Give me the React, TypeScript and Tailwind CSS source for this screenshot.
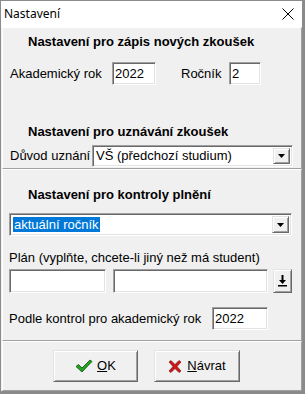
import React from 'react';

const sunken =
  'bg-white border-t border-l border-b border-r border-t-[#a0a0a0] border-l-[#a0a0a0] border-b-white border-r-white shadow-[inset_1px_1px_0_#696969,inset_-1px_-1px_0_#e3e3e3]';

const raised =
  'bg-[#f0f0f0] border-t border-l border-b border-r border-t-[#e3e3e3] border-l-[#e3e3e3] border-b-[#696969] border-r-[#696969] shadow-[inset_1px_1px_0_#ffffff,inset_-1px_-1px_0_#a0a0a0]';

const panel =
  'border-t border-l border-b border-r border-t-white border-l-white border-b-[#a0a0a0] border-r-[#a0a0a0]';

const Edit: React.FC<{ value?: string; className?: string }> = ({ value, className }) => (
  <div className={`${sunken} ${className} flex items-center pl-[2px] text-[13px] text-black`}>{value}</div>
);

const DropButton: React.FC = () => (
  <div className={`${raised} w-[17px] h-full flex items-center justify-center`}>
    <svg width="7" height="4" viewBox="0 0 7 4">
      <polygon points="0,0 7,0 3.5,4" fill="#000" />
    </svg>
  </div>
);

const Combo: React.FC<{ className?: string; children: React.ReactNode }> = ({ className, children }) => (
  <div className={`${sunken} ${className} flex items-stretch p-[2px]`}>
    <div className="flex-1 flex items-center pl-[1px] text-[13px] text-black">{children}</div>
    <DropButton />
  </div>
);

const CheckIcon = () => (
  <svg width="18" height="14" viewBox="0 0 18 14">
    <path d="M1 7.5 L3.5 5.5 L7 9 L15 1 L17 2.5 L7 13 Z" fill="#1fa51f" stroke="#0b4d0b" strokeWidth="0.8" strokeLinejoin="round" />
  </svg>
);

const CrossIcon = () => (
  <svg width="14" height="13" viewBox="0 0 14 13">
    <path d="M1 2 L3 0.5 L7 4.5 L11 0.5 L13 2 L9 6.5 L13 11 L11 12.5 L7 8.5 L3 12.5 L1 11 L5 6.5 Z" fill="#d01818" stroke="#6b0808" strokeWidth="0.6" strokeLinejoin="round" />
  </svg>
);

const DownBarIcon = () => (
  <svg width="9" height="12" viewBox="0 0 9 12">
    <rect x="3.5" y="0" width="2" height="5" fill="#000" />
    <polygon points="1,5 8,5 4.5,9" fill="#000" />
    <rect x="0" y="10" width="9" height="1.5" fill="#000" />
  </svg>
);

export default function App() {
  return (
    <div className="w-[305px] h-[394px] bg-[#8a8a8a] font-['Liberation_Sans',Arial,sans-serif] text-[13px] text-black">
      <div className="w-[303px] h-[392px] border border-[#8c8c8c] bg-[#f0f0f0] flex flex-col">
        {/* Title bar */}
        <div className="h-[26px] bg-white flex items-center justify-between pl-[3px] pr-[8px]">
          <span className="font-['Noto_Sans',sans-serif] text-[12px] text-black">Nastavení</span>
          <svg width="12" height="12" viewBox="0 0 12 12">
            <path d="M0.5 0.5 L11.5 11.5 M11.5 0.5 L0.5 11.5" stroke="#000" strokeWidth="1" />
          </svg>
        </div>

        <div className="flex-1 flex flex-col pl-[1px]">
          {/* Panel 1 */}
          <div className={`${panel} h-[142px] flex flex-col pl-[7px]`}>
            <div className="mt-[6px] pl-[18px] font-bold leading-[15px]">Nastavení pro zápis nových zkoušek</div>
            <div className="mt-[13px] flex items-center h-[23px]">
              <span className="w-[102px]">Akademický rok</span>
              <Edit value="2022" className="w-[44px] h-[23px]" />
              <span className="ml-[25px] w-[48px]">Ročník</span>
              <Edit value="2" className="w-[32px] h-[23px]" />
            </div>
            <div className="mt-[39px] pl-[18px] font-bold leading-[15px]">Nastavení pro uznávání zkoušek</div>
            <div className="mt-[6px] flex items-center h-[22px]">
              <span className="w-[82px]">Důvod uznání</span>
              <Combo className="w-[201px] h-[22px]">VŠ (předchozí studium)</Combo>
            </div>
          </div>

          {/* Panel 2 */}
          <div className={`${panel} h-[172px] flex flex-col pl-[6px]`}>
            <div className="mt-[17px] pl-[19px] font-bold leading-[15px]">Nastavení pro kontroly plnění</div>
            <Combo className="mt-[11px] w-[283px] h-[23px]">
              <span className="bg-[#0078d7] text-white px-[1px] leading-[15px]">aktuální ročník</span>
            </Combo>
            <div className="mt-[14px] leading-[15px]">Plán (vyplňte, chcete-li jiný než má student)</div>
            <div className="mt-[4px] flex items-center h-[24px]">
              <Edit className="w-[97px] h-[24px]" />
              <Edit className="ml-[7px] w-[155px] h-[24px]" />
              <div className={`${raised} ml-[5px] w-[19px] h-[24px] flex items-center justify-center`}>
                <DownBarIcon />
              </div>
            </div>
            <div className="mt-[14px] flex items-center h-[23px]">
              <span className="w-[203px]">Podle kontrol pro akademický rok</span>
              <Edit value="2022" className="w-[56px] h-[23px]" />
            </div>
          </div>

          {/* Buttons */}
          <div className={`${panel} flex-1 flex items-start pt-[8px] pl-[50px] gap-[16px]`}>
            <button className={`${raised} w-[85px] h-[32px] flex items-center justify-center gap-[4px] border-t-[#696969] border-l-[#696969]`}>
              <CheckIcon />
              <span><span className="underline">O</span>K</span>
            </button>
            <button className={`${raised} w-[86px] h-[32px] flex items-center justify-center gap-[5px] border-t-[#696969] border-l-[#696969]`}>
              <CrossIcon />
              <span><span className="underline">N</span>ávrat</span>
            </button>
          </div>
        </div>
      </div>
    </div>
  );
}
